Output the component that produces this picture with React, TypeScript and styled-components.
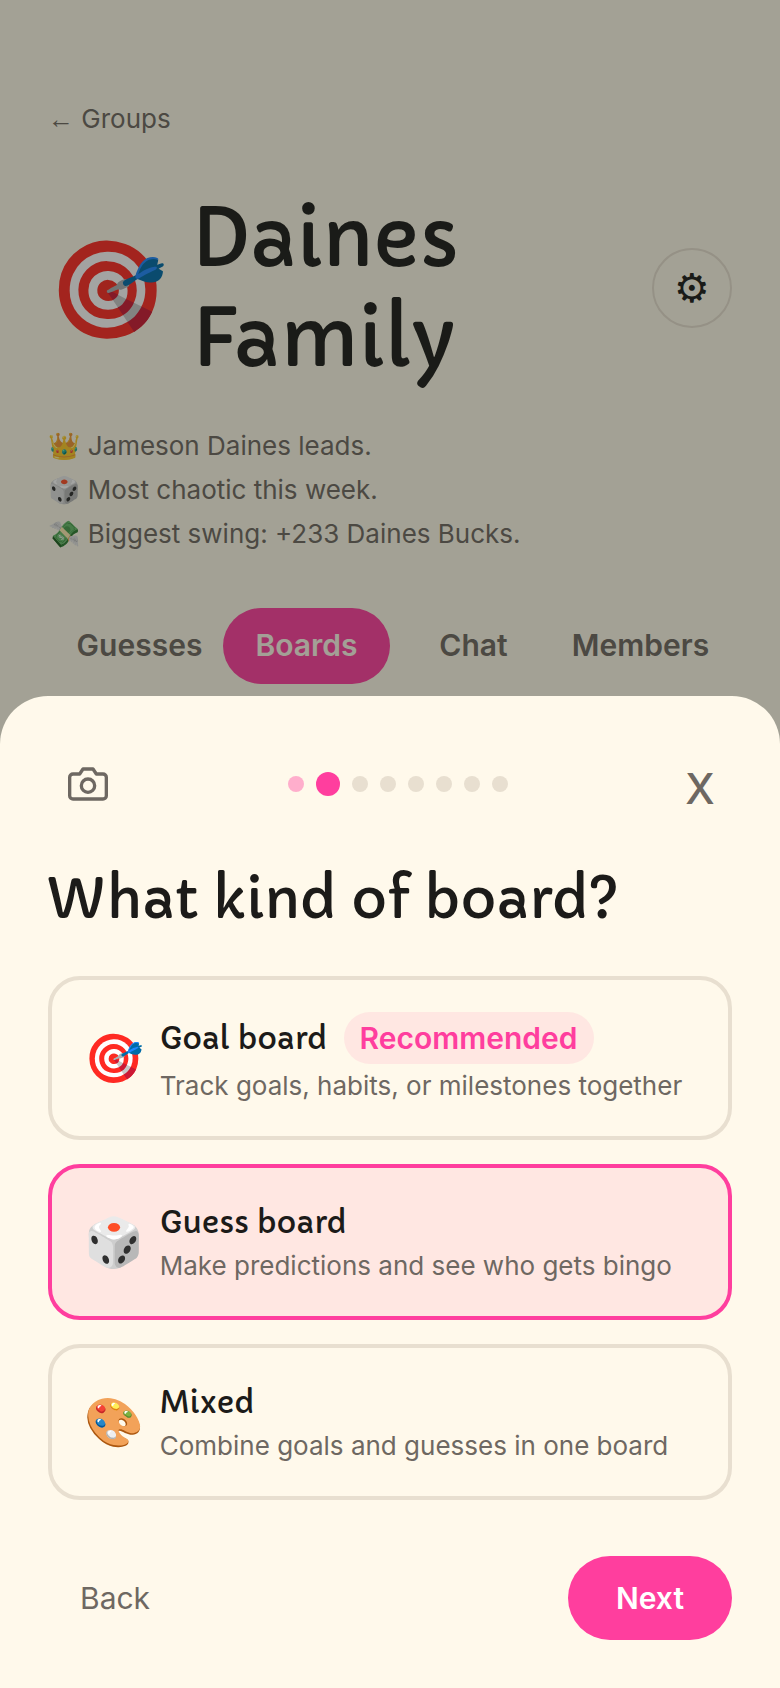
import { useState } from "react";
import styled, { createGlobalStyle } from "styled-components";

const colors = {
  cream: "#fff9eb",
  page: "#fffbe9",
  ink: "#1c1b19",
  muted: "#6e6862",
  line: "#e8dfd0",
  pink: "#ff3e9e",
  blush: "#ffe7e2",
};

const bodyFont = `Inter, "Liberation Sans", "Noto Color Emoji", sans-serif`;
const displayFont = `Capriola, Lato, "Noto Sans", sans-serif`;

const GlobalStyle = createGlobalStyle`
  *, *::before, *::after {
    box-sizing: border-box;
  }

  body {
    margin: 0;
    background: ${colors.page};
    color: ${colors.ink};
    font-family: ${bodyFont};
    font-size: 26px;
    font-optical-sizing: none;
  }

  h1, h2, ul, p {
    margin: 0;
    padding: 0;
  }

  button {
    border: 0;
    background: none;
    color: inherit;
    font: inherit;
    cursor: pointer;
  }
`;

const Page = styled.main`
  display: flex;
  flex-direction: column;
  align-items: stretch;
  min-height: 100vh;
  padding: 97px 48px 48px;
`;

const BackLink = styled.a`
  align-self: flex-start;
  color: ${colors.muted};
  line-height: 44px;
  text-decoration: none;
`;

const Arrow = styled.span`
  font-family: "Liberation Sans", sans-serif;
`;

const GroupHeader = styled.header`
  display: flex;
  align-items: center;
  gap: 24px;
  margin-top: 47px;
`;

const GroupEmoji = styled.span`
  font-size: 96px;
  line-height: 120px;
`;

const GroupName = styled.h1`
  flex: 1;
  font-family: ${displayFont};
  font-size: 79px;
  font-weight: 400;
  line-height: 100px;
`;

const SettingsButton = styled.button`
  width: 80px;
  height: 80px;
  padding: 0;
  border: 2px solid ${colors.line};
  border-radius: 50%;
  font-family: "DejaVu Sans", sans-serif;
  font-size: 40px;
  line-height: 76px;
`;

const Highlights = styled.ul`
  margin-top: 36px;
  color: ${colors.muted};
  line-height: 44px;
  list-style: none;
`;

const Tabs = styled.nav`
  display: grid;
  grid-template-columns: repeat(4, 1fr);
  margin-top: 52px;
  padding: 0 8px;
`;

const Tab = styled.button<{ $active: boolean }>`
  height: 76px;
  padding: 0 0 2px;
  border-radius: 38px;
  background: ${({ $active }) => ($active ? colors.pink : "transparent")};
  color: ${({ $active }) => ($active ? colors.cream : colors.muted)};
  font-size: 30px;
  font-weight: 600;
`;

const Backdrop = styled.div`
  position: fixed;
  inset: 0;
  display: flex;
  align-items: flex-end;
  background: rgba(26, 28, 22, 0.4);
`;

const Sheet = styled.section`
  width: 100%;
  padding: 48px;
  border-radius: 48px 48px 0 0;
  background: ${colors.cream};
`;

const SheetTop = styled.div`
  display: flex;
  align-items: center;
  justify-content: space-between;
  color: ${colors.muted};
`;

const CameraButton = styled.button`
  display: flex;
  padding: 20px;
`;

const CloseButton = styled.button`
  width: 64px;
  height: 80px;
  padding: 8px 0 0;
  font-size: 42px;
  font-weight: 500;
`;

const Dots = styled.div`
  display: flex;
  align-items: center;
  gap: 12px;
`;

const Dot = styled.span<{ $state: "done" | "current" | "upcoming" }>`
  width: ${({ $state }) => ($state === "current" ? 24 : 16)}px;
  height: ${({ $state }) => ($state === "current" ? 24 : 16)}px;
  border-radius: 50%;
  background: ${({ $state }) => ($state === "upcoming" ? colors.line : colors.pink)};
  opacity: ${({ $state }) => ($state === "done" ? 0.4 : 1)};
`;

const Question = styled.h2`
  margin-top: 38px;
  font-family: ${displayFont};
  font-size: 55px;
  font-weight: 400;
  line-height: 72px;
`;

const Options = styled.div`
  display: flex;
  flex-direction: column;
  gap: 24px;
  margin-top: 42px;
`;

const OptionCard = styled.button<{ $selected: boolean }>`
  display: flex;
  align-items: center;
  gap: 16px;
  padding: 32px;
  border: 4px solid ${({ $selected }) => ($selected ? colors.pink : colors.line)};
  border-radius: 32px;
  background: ${({ $selected }) => ($selected ? colors.blush : "transparent")};
  text-align: left;
`;

const OptionEmoji = styled.span`
  font-size: 48px;
  line-height: 60px;
`;

const OptionTitle = styled.span`
  display: flex;
  align-items: center;
  gap: 16px;
  font-family: ${displayFont};
  font-size: 30px;
  line-height: 44px;
`;

const Badge = styled.span`
  padding: 4px 16px;
  border-radius: 26px;
  background: ${colors.blush};
  color: ${colors.pink};
  font-family: ${bodyFont};
  font-size: 30px;
  font-weight: 600;
`;

const OptionText = styled.span`
  display: block;
  margin-top: 4px;
  color: ${colors.muted};
  line-height: 36px;
`;

const Footer = styled.footer`
  display: flex;
  align-items: center;
  justify-content: space-between;
  margin-top: 56px;
  font-size: 30px;
`;

const BackButton = styled.button`
  height: 84px;
  padding: 0 32px;
  color: ${colors.muted};
`;

const NextButton = styled.button`
  height: 84px;
  padding: 0 48px;
  border-radius: 42px;
  background: ${colors.pink};
  color: white;
  font-weight: 600;
`;

const highlights = [
  "👑 Jameson Daines leads.",
  "🎲 Most chaotic this week.",
  "💸 Biggest swing: +233 Daines Bucks.",
];

const tabs = ["Guesses", "Boards", "Chat", "Members"];

const options = [
  {
    id: "goal",
    emoji: "🎯",
    title: "Goal board",
    text: "Track goals, habits, or milestones together",
    recommended: true,
  },
  {
    id: "guess",
    emoji: "🎲",
    title: "Guess board",
    text: "Make predictions and see who gets bingo",
  },
  {
    id: "mixed",
    emoji: "🎨",
    title: "Mixed",
    text: "Combine goals and guesses in one board",
  },
];

const STEP_COUNT = 8;

function CameraIcon() {
  return (
    <svg
      width="40"
      height="40"
      viewBox="0 0 24 24"
      fill="none"
      stroke="currentColor"
      strokeWidth="2"
      strokeLinecap="round"
      strokeLinejoin="round"
      aria-hidden="true"
    >
      <path d="M23 19a2 2 0 0 1-2 2H3a2 2 0 0 1-2-2V8a2 2 0 0 1 2-2h4l2-3h6l2 3h4a2 2 0 0 1 2 2z" />
      <circle cx="12" cy="13" r="4" />
    </svg>
  );
}

function StepDots({ current }: { current: number }) {
  return (
    <Dots>
      {Array.from({ length: STEP_COUNT }, (_, idx) => (
        <Dot
          key={idx}
          $state={idx < current ? "done" : idx === current ? "current" : "upcoming"}
        />
      ))}
    </Dots>
  );
}

function BoardKindSheet() {
  const [selected, setSelected] = useState("guess");

  return (
    <Sheet role="dialog" aria-labelledby="board-kind">
      <SheetTop>
        <CameraButton aria-label="Camera">
          <CameraIcon />
        </CameraButton>
        <StepDots current={1} />
        <CloseButton aria-label="Close">X</CloseButton>
      </SheetTop>
      <Question id="board-kind">What kind of board?</Question>
      <Options>
        {options.map((option) => (
          <OptionCard
            key={option.id}
            $selected={option.id === selected}
            aria-pressed={option.id === selected}
            onClick={() => setSelected(option.id)}
          >
            <OptionEmoji>{option.emoji}</OptionEmoji>
            <span>
              <OptionTitle>
                {option.title}
                {option.recommended && <Badge>Recommended</Badge>}
              </OptionTitle>
              <OptionText>{option.text}</OptionText>
            </span>
          </OptionCard>
        ))}
      </Options>
      <Footer>
        <BackButton>Back</BackButton>
        <NextButton>Next</NextButton>
      </Footer>
    </Sheet>
  );
}

function App() {
  const [activeTab, setActiveTab] = useState("Boards");

  return (
    <>
      <GlobalStyle />
      <Page>
        <BackLink href="#groups">
          <Arrow>←</Arrow> Groups
        </BackLink>
        <GroupHeader>
          <GroupEmoji>🎯</GroupEmoji>
          <GroupName>Daines Family</GroupName>
          <SettingsButton aria-label="Group settings">{"⚙\uFE0E"}</SettingsButton>
        </GroupHeader>
        <Highlights>
          {highlights.map((line) => (
            <li key={line}>{line}</li>
          ))}
        </Highlights>
        <Tabs>
          {tabs.map((tab) => (
            <Tab key={tab} $active={tab === activeTab} onClick={() => setActiveTab(tab)}>
              {tab}
            </Tab>
          ))}
        </Tabs>
      </Page>
      <Backdrop>
        <BoardKindSheet />
      </Backdrop>
    </>
  );
}

export default App;
